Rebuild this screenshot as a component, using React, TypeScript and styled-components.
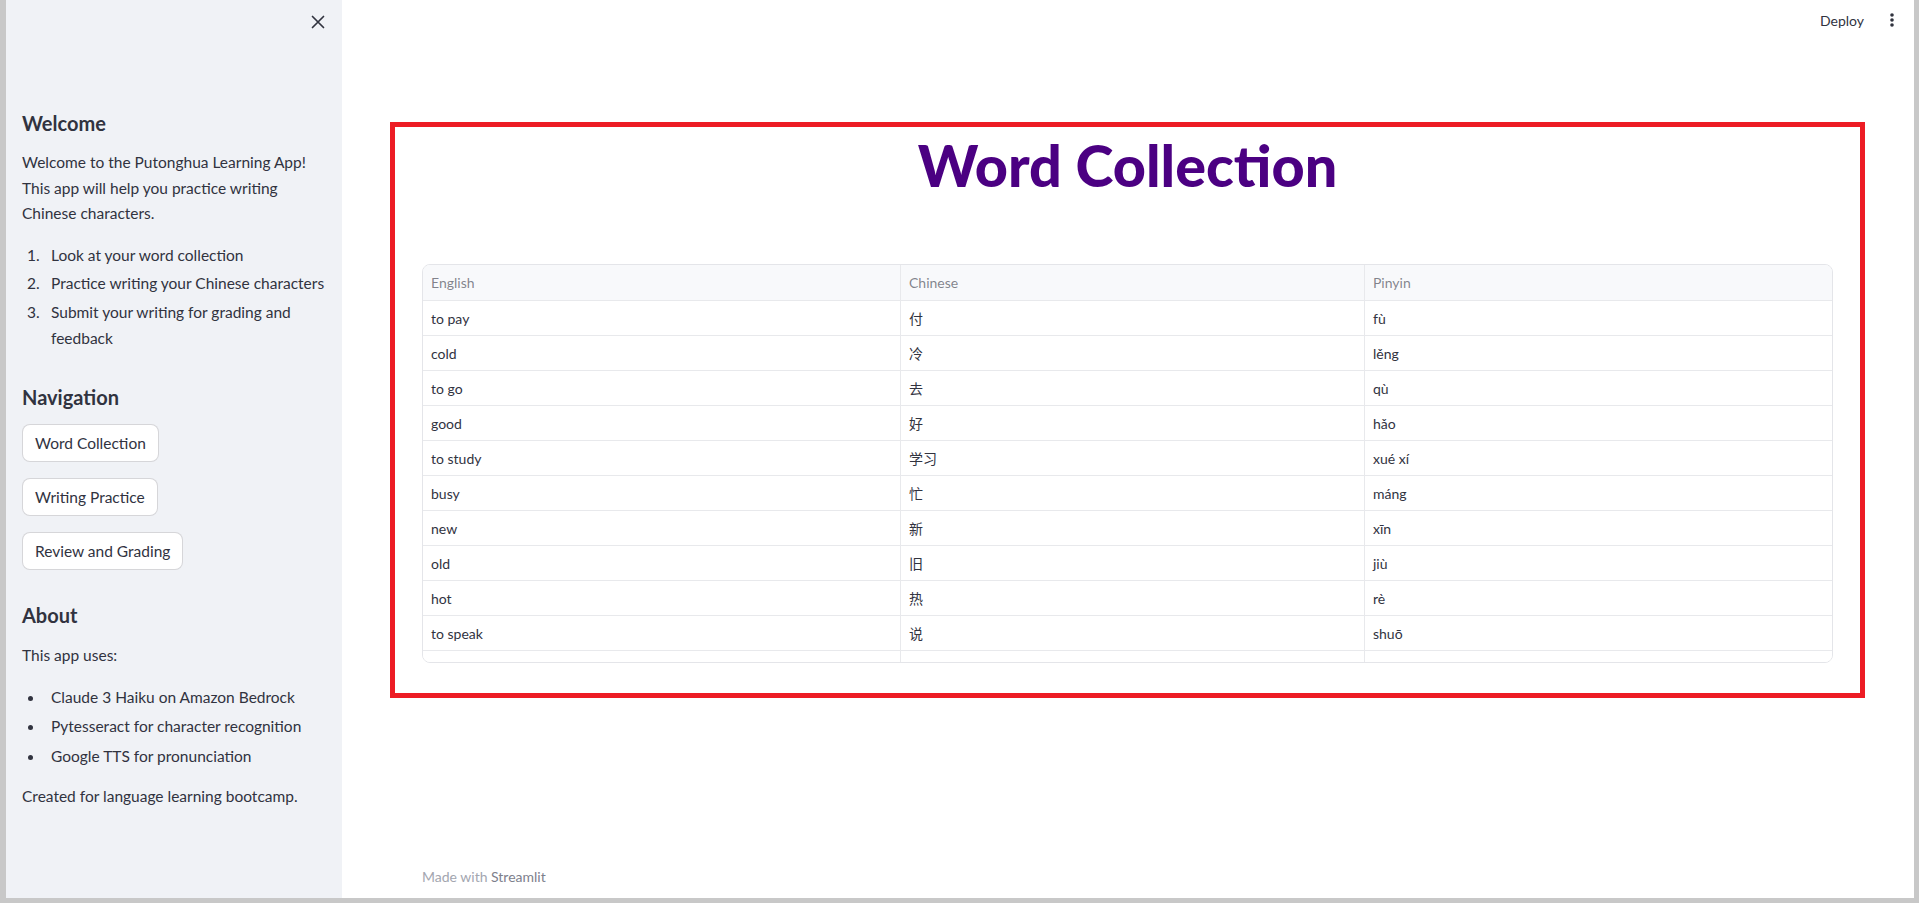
import React from "react";
import styled, { createGlobalStyle } from "styled-components";

const GlobalStyle = createGlobalStyle`
  html, body {
    margin: 0;
    padding: 0;
    height: 100%;
  }

  body {
    background: #c8c8c8;
    font-family: Lato, "Noto Sans CJK SC", sans-serif;
    color: #31333f;
  }

  #root {
    height: 100%;
  }
`;

const Shell = styled.div`
  display: flex;
  height: 898px;
  margin: 0 5px 0 6px;
`;

const Sidebar = styled.aside`
  width: 336px;
  flex-shrink: 0;
  background: #f0f2f6;
  display: flex;
  flex-direction: column;
`;

const SidebarTop = styled.div`
  height: 44px;
  display: flex;
  align-items: center;
  justify-content: flex-end;
  padding: 0 12px;
`;

const SidebarBody = styled.div`
  padding: 0 16px;
`;

const SideHeading = styled.h3<{ $top: number }>`
  margin: ${(p) => p.$top}px 0 0;
  font-size: 20px;
  line-height: 24px;
  font-weight: 700;
`;

const SideText = styled.p<{ $top: number }>`
  margin: ${(p) => p.$top}px 0 0;
  font-size: 15.5px;
  line-height: 25.6px;
  white-space: nowrap;
`;

const List = styled.ul<{ $top: number; $gap: number }>`
  list-style: none;
  margin: ${(p) => p.$top}px 0 0;
  padding: 0;

  li + li {
    margin-top: ${(p) => p.$gap}px;
  }
`;

const ListItem = styled.li`
  display: flex;
  font-size: 15.5px;
  line-height: 25.6px;
  white-space: nowrap;
`;

const Marker = styled.span<{ $dot?: boolean }>`
  width: 29px;
  flex-shrink: 0;
  padding-left: 5px;
  box-sizing: border-box;
  position: relative;

  ${(p) =>
    p.$dot &&
    `
    &::before {
      content: "";
      position: absolute;
      left: 6px;
      top: 11px;
      width: 5px;
      height: 5px;
      border-radius: 50%;
      background: #31333f;
    }
  `}
`;

const NavStack = styled.div`
  display: flex;
  flex-direction: column;
  align-items: flex-start;
  gap: 16px;
  margin-top: 15px;
`;

const NavButton = styled.button`
  height: 38px;
  padding: 0 12px;
  background: #ffffff;
  border: 1px solid rgba(49, 51, 63, 0.2);
  border-radius: 8px;
  font-family: inherit;
  font-size: 15.5px;
  color: #31333f;
  cursor: pointer;
`;

const Main = styled.main`
  flex: 1;
  background: #ffffff;
  display: flex;
  flex-direction: column;
`;

const TopBar = styled.header`
  height: 40px;
  display: flex;
  align-items: center;
  justify-content: flex-end;
  gap: 20px;
  padding-right: 14px;
`;

const DeployLink = styled.span`
  font-size: 14px;
  color: #31333f;
`;

const Content = styled.section`
  padding: 82px 49px 0 48px;
`;

const Frame = styled.div`
  border: 5px solid #ed1c24;
  padding: 0 27px 30px 27px;
`;

const Title = styled.h1`
  margin: 2px 0 63px;
  text-align: center;
  font-size: 57.5px;
  line-height: 72px;
  font-weight: 900;
  color: #4b0082;
`;

const Grid = styled.div`
  height: 399px;
  box-sizing: border-box;
  border: 1px solid #e4e5e9;
  border-radius: 8px;
  overflow: hidden;
`;

const Row = styled.div<{ $head?: boolean }>`
  display: grid;
  grid-template-columns: 478px 464px 1fr;
  height: ${(p) => (p.$head ? 36 : 35)}px;
  box-sizing: border-box;
  border-bottom: 1px solid #e8e9ec;
  background: ${(p) => (p.$head ? "#f8f9fb" : "#ffffff")};
  color: ${(p) => (p.$head ? "rgba(49, 51, 63, 0.6)" : "#31333f")};
`;

const Cell = styled.div`
  display: flex;
  align-items: center;
  padding: 0 8px;
  font-size: 14px;
  font-family: Lato, "Noto Sans CJK SC", sans-serif;
  border-right: 1px solid #e8e9ec;

  &:last-child {
    border-right: none;
  }
`;

const Footer = styled.footer`
  margin-top: auto;
  padding: 0 0 10px 80px;
  font-size: 14px;
  line-height: 22px;
  color: #a3a6b0;

  b {
    font-weight: 400;
    color: #7d808c;
  }
`;

const words: [string, string, string][] = [
  ["to pay", "付", "fù"],
  ["cold", "冷", "lěng"],
  ["to go", "去", "qù"],
  ["good", "好", "hǎo"],
  ["to study", "学习", "xué xí"],
  ["busy", "忙", "máng"],
  ["new", "新", "xīn"],
  ["old", "旧", "jiù"],
  ["hot", "热", "rè"],
  ["to speak", "说", "shuō"],
  ["to get up", "起床", "qǐ chuáng"],
];

function CloseIcon() {
  return (
    <svg width="24" height="24" viewBox="0 0 24 24" fill="none">
      <path
        d="M6.5 6.5l11 11M17.5 6.5l-11 11"
        stroke="#31333f"
        strokeWidth="1.7"
        strokeLinecap="round"
      />
    </svg>
  );
}

function KebabIcon() {
  return (
    <svg width="16" height="24" viewBox="0 0 16 24" fill="#31333f">
      <circle cx="8" cy="7" r="1.8" />
      <circle cx="8" cy="12" r="1.8" />
      <circle cx="8" cy="17" r="1.8" />
    </svg>
  );
}

export default function App() {
  return (
    <>
      <GlobalStyle />
      <Shell>
        <Sidebar>
          <SidebarTop>
            <CloseIcon />
          </SidebarTop>
          <SidebarBody>
            <SideHeading $top={67}>Welcome</SideHeading>
            <SideText $top={15}>
              Welcome to the Putonghua Learning App!
              <br />
              This app will help you practice writing
              <br />
              Chinese characters.
            </SideText>
            <List as="ol" $top={16} $gap={3}>
              <ListItem>
                <Marker>1.</Marker>
                <span>Look at your word collection</span>
              </ListItem>
              <ListItem>
                <Marker>2.</Marker>
                <span>Practice writing your Chinese characters</span>
              </ListItem>
              <ListItem>
                <Marker>3.</Marker>
                <span>
                  Submit your writing for grading and
                  <br />
                  feedback
                </span>
              </ListItem>
            </List>

            <SideHeading $top={34}>Navigation</SideHeading>
            <NavStack>
              <NavButton>Word Collection</NavButton>
              <NavButton>Writing Practice</NavButton>
              <NavButton>Review and Grading</NavButton>
            </NavStack>

            <SideHeading $top={33}>About</SideHeading>
            <SideText $top={16}>This app uses:</SideText>
            <List $top={16} $gap={4}>
              <ListItem>
                <Marker $dot />
                <span>Claude 3 Haiku on Amazon Bedrock</span>
              </ListItem>
              <ListItem>
                <Marker $dot />
                <span>Pytesseract for character recognition</span>
              </ListItem>
              <ListItem>
                <Marker $dot />
                <span>Google TTS for pronunciation</span>
              </ListItem>
            </List>
            <SideText $top={14}>Created for language learning bootcamp.</SideText>
          </SidebarBody>
        </Sidebar>

        <Main>
          <TopBar>
            <DeployLink>Deploy</DeployLink>
            <KebabIcon />
          </TopBar>
          <Content>
            <Frame>
              <Title>Word Collection</Title>
              <Grid>
                <Row $head>
                  <Cell>English</Cell>
                  <Cell>Chinese</Cell>
                  <Cell>Pinyin</Cell>
                </Row>
                {words.map(([en, zh, py]) => (
                  <Row key={en}>
                    <Cell>{en}</Cell>
                    <Cell>{zh}</Cell>
                    <Cell>{py}</Cell>
                  </Row>
                ))}
              </Grid>
            </Frame>
          </Content>
          <Footer>
            Made with <b>Streamlit</b>
          </Footer>
        </Main>
      </Shell>
    </>
  );
}
